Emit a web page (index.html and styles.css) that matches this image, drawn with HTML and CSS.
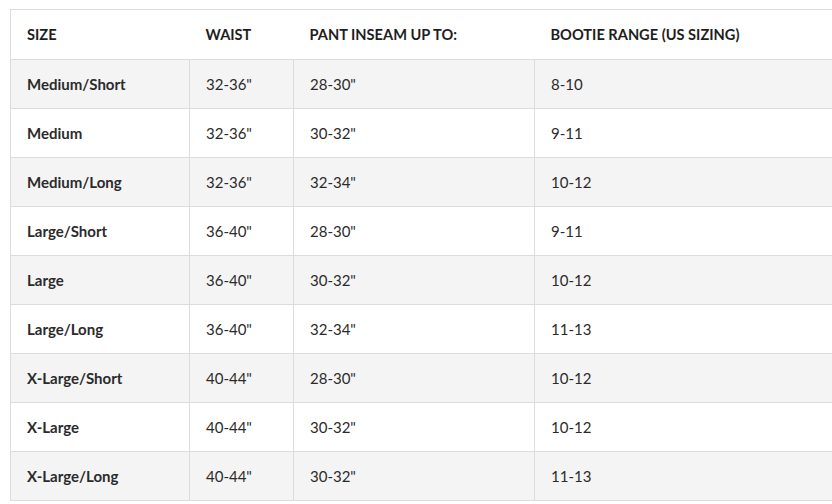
FILE: index.html
```html
<!DOCTYPE html>
<html>
<head>
<meta charset="utf-8">
<link rel="stylesheet" href="styles.css">
</head>
<body>
<div class="wrap">
<table class="size-table">
  <colgroup>
    <col class="c1"><col class="c2"><col class="c3"><col class="c4">
  </colgroup>
  <thead>
    <tr><th>SIZE</th><th>WAIST</th><th>PANT INSEAM UP TO:</th><th>BOOTIE RANGE (US SIZING)</th></tr>
  </thead>
  <tbody>
    <tr><td class="name">Medium/Short</td><td>32-36"</td><td>28-30"</td><td>8-10</td></tr>
    <tr><td class="name">Medium</td><td>32-36"</td><td>30-32"</td><td>9-11</td></tr>
    <tr><td class="name">Medium/Long</td><td>32-36"</td><td>32-34"</td><td>10-12</td></tr>
    <tr><td class="name">Large/Short</td><td>36-40"</td><td>28-30"</td><td>9-11</td></tr>
    <tr><td class="name">Large</td><td>36-40"</td><td>30-32"</td><td>10-12</td></tr>
    <tr><td class="name">Large/Long</td><td>36-40"</td><td>32-34"</td><td>11-13</td></tr>
    <tr><td class="name">X-Large/Short</td><td>40-44"</td><td>28-30"</td><td>10-12</td></tr>
    <tr><td class="name">X-Large</td><td>40-44"</td><td>30-32"</td><td>10-12</td></tr>
    <tr><td class="name">X-Large/Long</td><td>40-44"</td><td>30-32"</td><td>11-13</td></tr>
  </tbody>
</table>
</div>
</body>
</html>
```
FILE: styles.css
```css
html, body {
  margin: 0;
  padding: 0;
  background: #fff;
  overflow: hidden;
}
.wrap {
  padding: 9px 0 0 10px;
}
.size-table {
  border-collapse: collapse;
  table-layout: fixed;
  width: 823px;
  font-family: Lato, "Liberation Sans", sans-serif;
  font-size: 15px;
  color: #2b2b2b;
  border: 1px solid #dcdcdc;
}
.c1 { width: 179px; }
.c2 { width: 104px; }
.c3 { width: 241px; }
.c4 { width: auto; }
.size-table th {
  height: 50px;
  padding: 0 16px;
  text-align: left;
  font-weight: 700;
  font-size: 14.6px;
  color: #1e1e1e;
  border-bottom: 1px solid #dcdcdc;
  box-sizing: border-box;
}
.size-table td {
  height: 49px;
  padding: 0 16px;
  border: 1px solid #dcdcdc;
  box-sizing: border-box;
}
.size-table td.name {
  font-weight: 700;
}
.size-table tbody tr:nth-child(odd) {
  background: #f4f4f4;
}
```
